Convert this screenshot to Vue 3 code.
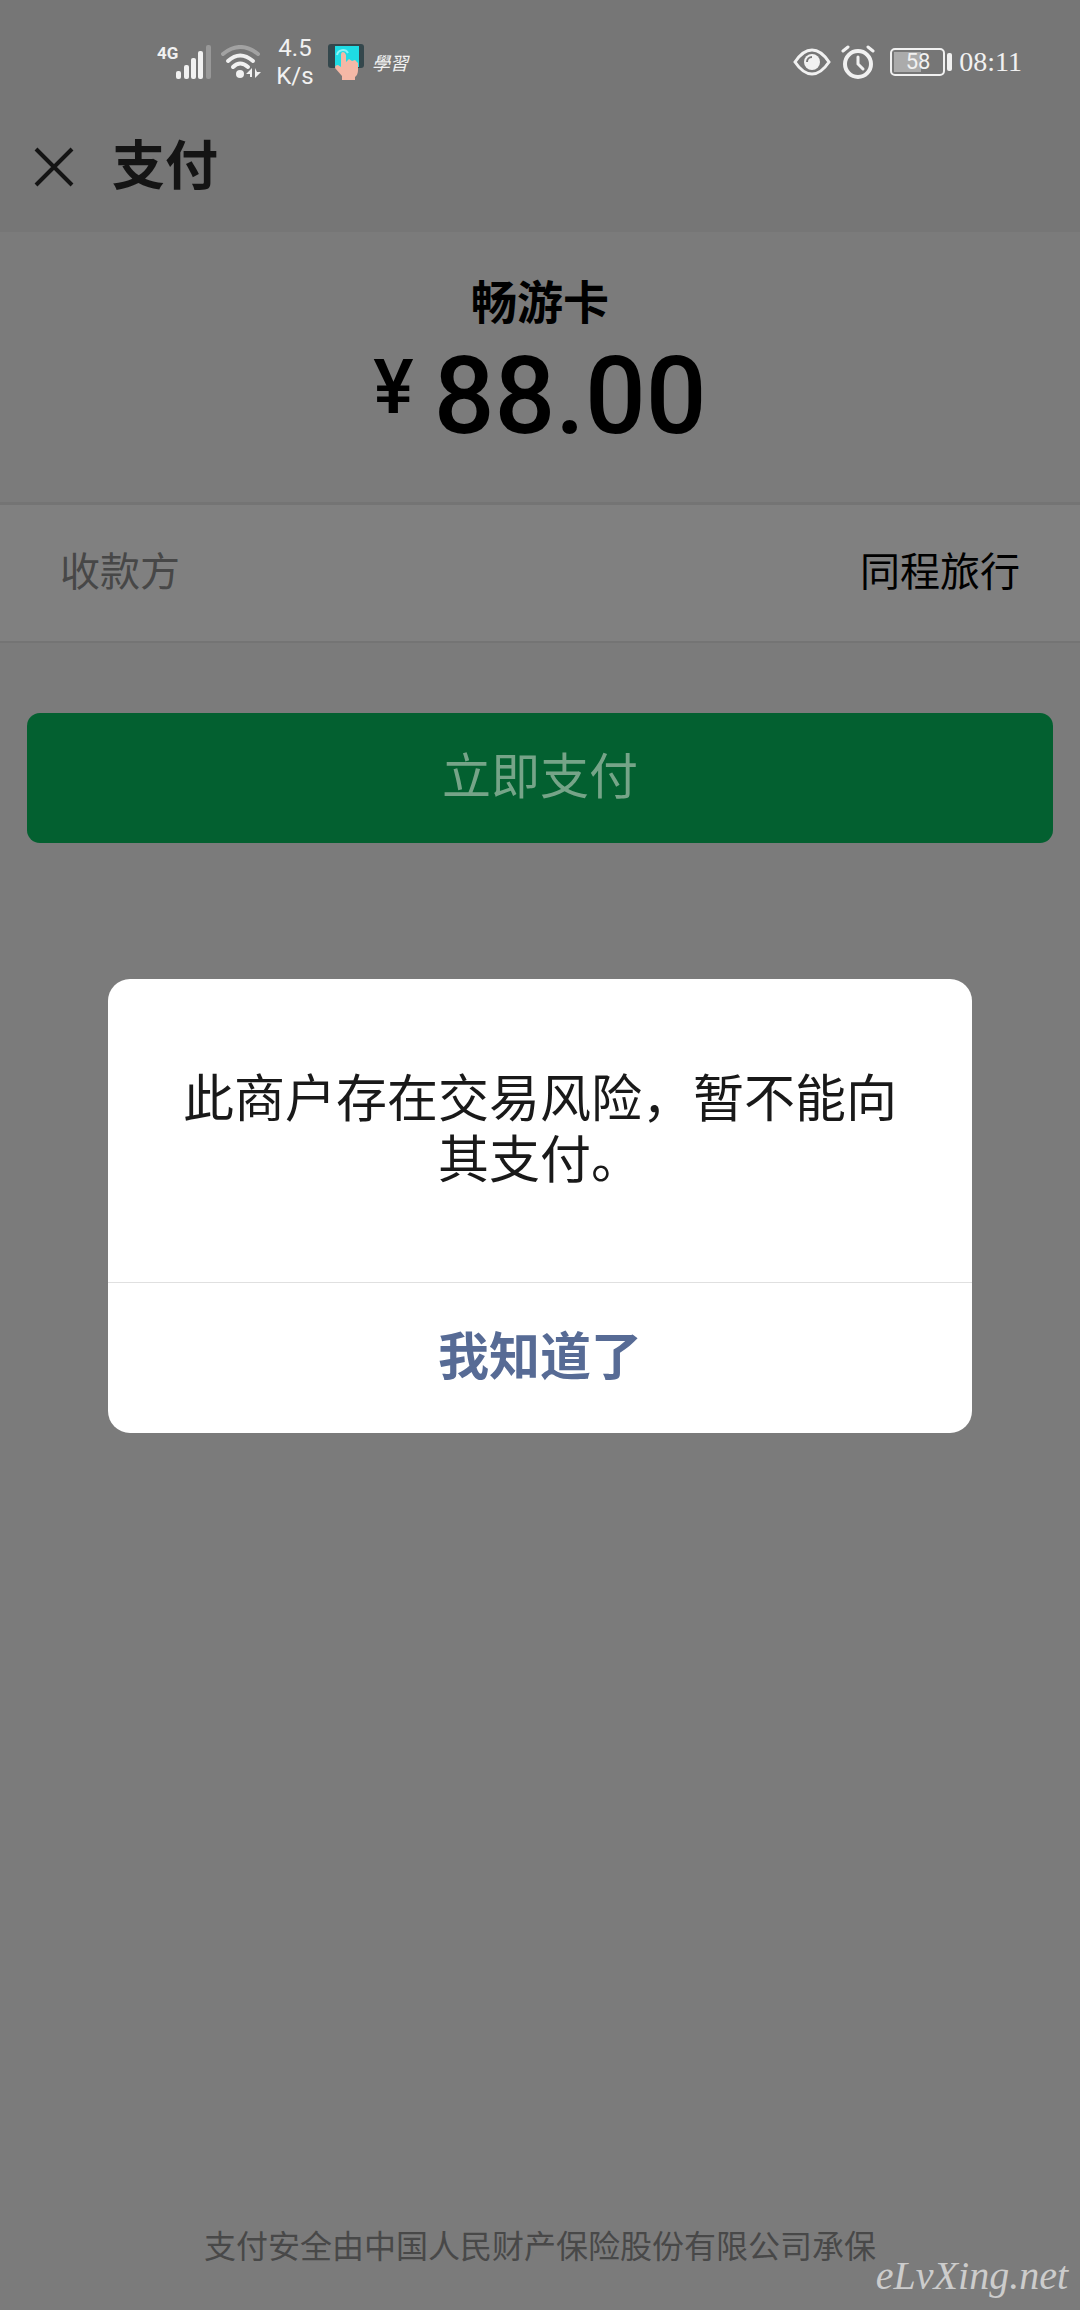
<script setup>
import { ref } from 'vue'

const payee = '同程旅行'
const product = '畅游卡'
const amount = '88.00'
const warningOpen = ref(true)
</script>

<template>
  <div class="screen">
    <header class="status">
      <div class="group">
        <svg class="signal" width="54" height="36" viewBox="0 0 54 36" aria-label="4G">
          <text x="0" y="15" class="net">4G</text>
          <g fill="#f1f1f1">
            <rect x="19" y="27" width="5" height="8" rx="2" />
            <rect x="27" y="21" width="5" height="14" rx="2" />
            <rect x="34" y="14" width="5" height="21" rx="2" />
            <rect x="41" y="7" width="5" height="28" rx="2" />
          </g>
          <rect x="49" y="1" width="5" height="34" rx="2" fill="#989898" />
        </svg>
        <svg class="wifi" width="40" height="34" viewBox="0 0 40 34" fill="none" stroke-linecap="round">
          <path d="M2 9Q19-5 37 9" stroke="#a2a2a2" stroke-width="4" />
          <path d="M7 16Q19 5 32 16" stroke="#f1f1f1" stroke-width="4" />
          <path d="M12 22Q19 15 27 22" stroke="#f1f1f1" stroke-width="4" />
          <circle cx="19" cy="29" r="4" fill="#f1f1f1" />
          <path d="M25 29l6-6v9h-2v-3zM40 27l-6 6v-10l2 4z" fill="#f1f1f1" />
        </svg>
        <div class="speed"><span>4.5</span><span>K/s</span></div>
        <svg class="touch" width="36" height="38" viewBox="0 0 36 38">
          <rect x="0" y="1" width="36" height="24" rx="3" fill="#34474c" />
          <rect x="7" y="3" width="24" height="21" fill="#1fdce4" />
          <path d="M9 12a6 6 0 0 1 11-2" fill="none" stroke="#8df3f5" stroke-width="2" />
          <path d="M13 12q0-3 2-3t3 3v7l3-3 3 2 3-1 3 3v7q0 5-3 7v3H14v-4l-7-8q0-3 3-3l3 2z" fill="#f5b8a6" />
        </svg>
        <span class="study">學習</span>
      </div>
      <div class="group">
        <svg class="eye" width="38" height="30" viewBox="0 0 38 30">
          <path d="M2 15Q10 3 19 3t17 12Q28 27 19 27T2 15z" fill="none" stroke="#f1f1f1" stroke-width="3" />
          <circle cx="19" cy="15" r="8" fill="#f1f1f1" />
          <path d="M14 15a5 5 0 0 1 5-5" fill="none" stroke="#777" stroke-width="2" />
        </svg>
        <svg class="alarm" width="34" height="36" viewBox="0 0 34 36" fill="none" stroke="#f1f1f1" stroke-linecap="round">
          <circle cx="17" cy="20" r="13" stroke-width="4" />
          <path d="M17 13v7l5 5" stroke-width="3" />
          <path d="M2 7l5-4M32 7l-5-4" stroke-width="3" />
        </svg>
        <svg class="battery" width="64" height="30" viewBox="0 0 64 30">
          <rect x="2" y="2" width="53" height="26" rx="4" fill="none" stroke="#f1f1f1" stroke-width="2" />
          <rect x="5" y="5" width="27" height="20" fill="#ababab" />
          <rect x="58" y="6" width="5" height="18" rx="2" fill="#f1f1f1" />
          <text x="29" y="22" text-anchor="middle" class="level">58</text>
        </svg>
        <time class="clock">08:11</time>
      </div>
    </header>

    <nav class="bar">
      <button class="close" type="button" aria-label="关闭">
        <svg width="40" height="40" viewBox="0 0 40 40" stroke="#141414" stroke-width="4">
          <path d="M2 2l36 36M38 2L2 38" />
        </svg>
      </button>
      <h1>支付</h1>
    </nav>

    <main>
      <section class="order">
        <h2>{{ product }}</h2>
        <p class="amount"><span class="yen">¥</span><span>{{ amount }}</span></p>
      </section>
      <dl class="payee">
        <dt>收款方</dt>
        <dd>{{ payee }}</dd>
      </dl>
      <button class="pay" type="button">立即支付</button>
    </main>

    <footer>支付安全由中国人民财产保险股份有限公司承保</footer>
    <span class="mark">eLvXing.net</span>

    <div v-if="warningOpen" class="layer">
      <div class="dialog" role="alertdialog" aria-modal="true" aria-labelledby="warning">
        <p id="warning">此商户存在交易风险，暂不能向其支付。</p>
        <button type="button" @click="warningOpen = false">我知道了</button>
      </div>
    </div>
  </div>
</template>

<style>
body {
  margin: 0;
}
</style>

<style scoped>
.screen {
  position: relative;
  display: flex;
  flex-direction: column;
  min-height: 100vh;
  background: #7b7b7b;
  color: #000;
  font-family: Roboto, "Noto Sans CJK SC", sans-serif;
}
h1, h2, p, dl, dd {
  margin: 0;
}
button {
  border: 0;
  padding: 0;
  background: none;
  font-family: inherit;
}
svg {
  display: block;
  flex: none;
}
.status {
  display: flex;
  justify-content: space-between;
  align-items: center;
  box-sizing: border-box;
  height: 102px;
  padding: 22px 58px 0 157px;
  background: #767676;
  color: #f1f1f1;
}
.group {
  display: flex;
  align-items: center;
}
.net {
  font: 700 17px Roboto, sans-serif;
  fill: #f1f1f1;
}
.wifi {
  margin-left: 10px;
}
.speed {
  display: flex;
  flex-direction: column;
  align-items: center;
  width: 40px;
  margin-left: 14px;
  font-size: 24px;
  line-height: 28px;
}
.touch {
  margin-left: 13px;
}
.study {
  margin-left: 8px;
  font: italic 18px "Noto Sans CJK TC", sans-serif;
}
.alarm {
  margin-left: 10px;
}
.battery {
  margin-left: 14px;
}
.level {
  font: 22px Roboto, sans-serif;
  fill: #f1f1f1;
}
.clock {
  margin-left: 6px;
  font: 28px "Liberation Serif", serif;
}
.bar {
  display: flex;
  align-items: center;
  height: 130px;
  padding-left: 34px;
  background: #767676;
}
h1 {
  margin-left: 38px;
  color: #141414;
  font-size: 53px;
  line-height: 72px;
}
.order {
  padding: 41px 0 50px;
  border-bottom: 3px solid #747474;
  text-align: center;
}
h2 {
  font-size: 46px;
  line-height: 60px;
}
.amount {
  display: flex;
  justify-content: center;
  gap: 20px;
  margin-top: 9px;
  font-size: 107px;
  font-weight: 500;
  line-height: 110px;
}
.yen {
  font-size: 76px;
  line-height: 90px;
}
.payee {
  display: flex;
  justify-content: space-between;
  align-items: center;
  height: 136px;
  padding: 0 60px;
  background: #808080;
  border-bottom: 2px solid #747474;
  font-size: 40px;
  line-height: 60px;
}
dt {
  color: #474747;
}
.pay {
  display: block;
  width: calc(100% - 54px);
  height: 130px;
  margin: 70px 27px 0;
  border-radius: 13px;
  background: #036030;
  color: #76a488;
  font-size: 49px;
  line-height: 72px;
}
footer {
  margin-top: auto;
  padding-bottom: 40px;
  color: #484848;
  font-size: 32px;
  line-height: 46px;
  text-align: center;
}
.mark {
  position: absolute;
  right: 12px;
  bottom: 10px;
  color: #ccc;
  font: italic 40px/48px "Liberation Serif", serif;
}
.layer {
  position: absolute;
  inset: 102px 0 0;
  display: flex;
  align-items: center;
  justify-content: center;
}
.dialog {
  width: 80%;
  border-radius: 22px;
  background: #fff;
  overflow: hidden;
}
.dialog p {
  padding: 90px 64px 91px;
  color: #191919;
  font-size: 51px;
  line-height: 61px;
  text-align: center;
}
.dialog button {
  display: block;
  width: 100%;
  height: 151px;
  border-top: 1px solid #e0e0e0;
  color: #576b95;
  font-size: 51px;
  font-weight: 700;
  line-height: 72px;
}
</style>
